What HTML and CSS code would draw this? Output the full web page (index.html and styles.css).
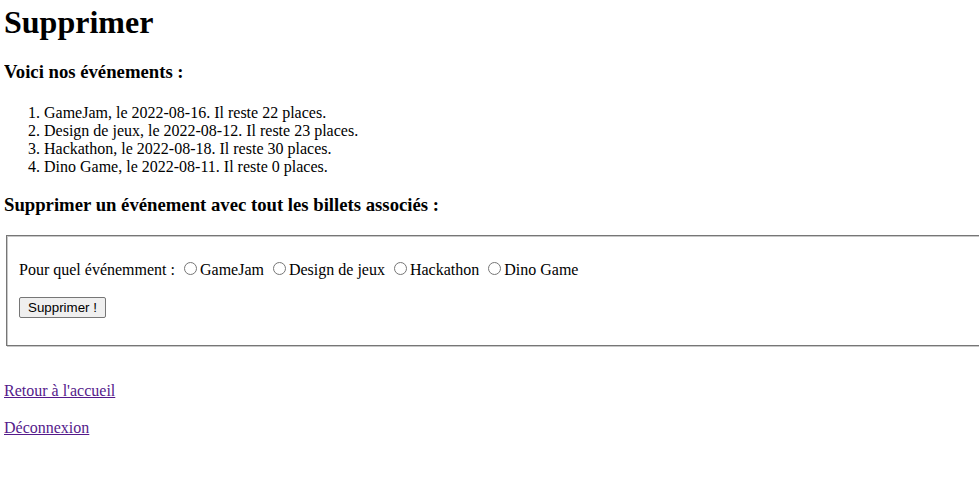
FILE: index.html
```html
<!DOCTYPE html>
<html lang="fr">
<head>
<meta charset="utf-8">
<title>Supprimer</title>
<link rel="stylesheet" href="styles.css">
</head>
<body class="page">
<h1 class="title">Supprimer</h1>
<h3 class="subtitle">Voici nos événements :</h3>
<ol class="events">
<li>GameJam, le 2022-08-16. Il reste 22 places.</li>
<li>Design de jeux, le 2022-08-12. Il reste 23 places.</li>
<li>Hackathon, le 2022-08-18. Il reste 30 places.</li>
<li>Dino Game, le 2022-08-11. Il reste 0 places.</li>
</ol>
<h3 class="subtitle subtitle-form">Supprimer un événement avec tout les billets associés :</h3>
<form class="form">
<fieldset class="box">
<p class="row">Pour quel événemment :
<input type="radio" name="ev" id="e1" class="radio"><label for="e1">GameJam</label>
<input type="radio" name="ev" id="e2" class="radio"><label for="e2">Design de jeux</label>
<input type="radio" name="ev" id="e3" class="radio"><label for="e3">Hackathon</label>
<input type="radio" name="ev" id="e4" class="radio"><label for="e4">Dino Game</label>
</p>
<p class="row row-btn"><button type="button" class="btn">Supprimer !</button></p>
</fieldset>
</form>
<nav class="links">
<a class="link" href="#">Retour à l'accueil</a>
<a class="link" href="#">Déconnexion</a>
</nav>
</body>
</html>
```
FILE: styles.css
```css
html {
  overflow: hidden;
}
.page {
  margin: 4px 0 0 4px;
  font-family: "Liberation Serif", "Times New Roman", serif;
  font-size: 16px;
  line-height: 17.7px;
  color: #000;
  background: #fff;
}
.title {
  font-size: 32px;
  line-height: 36px;
  margin: 0 0 21.44px;
  font-weight: bold;
}
.subtitle {
  font-size: 18.72px;
  line-height: 21px;
  margin: 18.72px 0;
  font-weight: bold;
}
.subtitle-form {
  margin-bottom: 20px;
}
.events {
  margin: 22px 0 18.72px;
  padding-left: 40px;
}
.form {
  margin: 0;
}
.box {
  margin: 0 2px;
  width: 1100px;
  padding: 6.6px 12px 11px;
  border: 1px solid #767676;
  box-shadow: inset 1px 1px 0 #c8c8c8, 1px 1px 0 #c8c8c8;
}
.row {
  margin: 16px 0;
}
.row-btn {
  display: flex;
  margin: 19px 0 16px;
}
.btn {
  box-sizing: border-box;
  height: 21px;
  padding: 1px 8px;
  font-family: "Liberation Sans", Arial, sans-serif;
  font-size: 13.33px;
  border: 1px solid #767676;
  border-radius: 2px;
  background: #efefef;
  color: #000;
}
.radio {
  margin: 3px 3px 0 5px;
}
.links {
  display: flex;
  flex-direction: column;
  align-items: flex-start;
  gap: 19.5px;
  margin-top: 36px;
}
.link {
  color: #551a8b;
  text-decoration: underline;
}
```
